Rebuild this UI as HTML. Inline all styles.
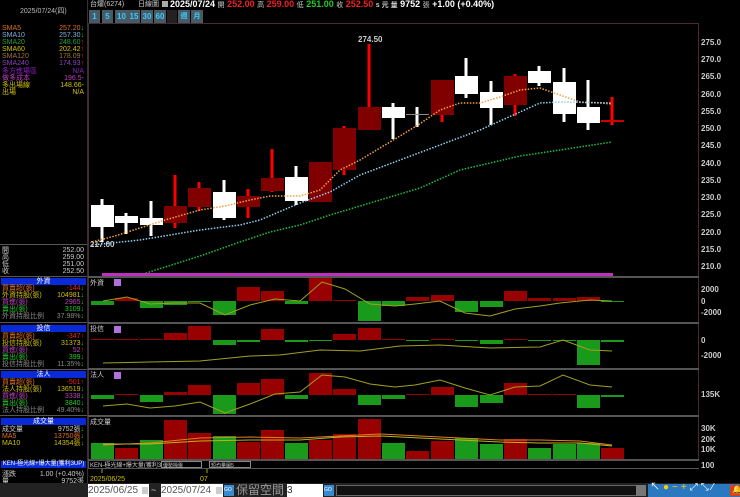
<!DOCTYPE html>
<html><head><meta charset="utf-8"><style>
*{margin:0;padding:0;box-sizing:border-box}
body{width:740px;height:497px;background:#000;overflow:hidden;position:relative;font-family:"Liberation Sans","Noto Sans CJK TC",sans-serif;color:#ccc}
.a{position:absolute;white-space:nowrap;line-height:1}
.s{font-size:7px}
.hd{position:absolute;left:1px;width:85px;height:7px;background:#0a2ad8;color:#fff;font-size:7px;text-align:center;line-height:7px}
.r{position:absolute;left:2px;width:82px;font-size:7px;line-height:7px;display:flex;justify-content:space-between}
.btn{position:absolute;top:10px;height:13px;background:#4a5a64;color:#3cf;font-size:8px;font-weight:bold;text-align:center;line-height:13px}
</style></head><body>
<!-- left header -->
<div class="a s" style="left:20px;top:8px;color:#bbb">2025/07/24(四)</div>
<div class="a" style="left:87px;top:0;width:1px;height:497px;background:#333"></div>
<div class="r" style="top:25px"><span style="color:#e07020">SMA5</span><span style="color:#e07020">257.20<b style="color:#2c2">↓</b></span></div>
<div class="r" style="top:32px"><span style="color:#80b0e0">SMA10</span><span style="color:#80b0e0">257.30<b style="color:#2c2">↓</b></span></div>
<div class="r" style="top:39px"><span style="color:#20a040">SMA20</span><span style="color:#20a040">248.60<b style="color:#e22">↑</b></span></div>
<div class="r" style="top:46px"><span style="color:#d0c000">SMA60</span><span style="color:#d0c000">202.42<b style="color:#e22">↑</b></span></div>
<div class="r" style="top:53px"><span style="color:#a07040">SMA120</span><span style="color:#a07040">178.09<b style="color:#e22">↑</b></span></div>
<div class="r" style="top:60px"><span style="color:#9040c0">SMA240</span><span style="color:#9040c0">174.93<b style="color:#e22">↑</b></span></div>
<div class="r" style="top:68px"><span style="color:#9020c0">多方進場區</span><span style="color:#9020c0">N/A</span></div>
<div class="r" style="top:75px"><span style="color:#c040c0">做多成本</span><span style="color:#c040c0">196.5-</span></div>
<div class="r" style="top:82px"><span style="color:#d0c000">多出場線</span><span style="color:#d0c000">148.66-</span></div>
<div class="r" style="top:89px"><span style="color:#d0c000">出場</span><span style="color:#d0c000">N/A</span></div>
<div class="a" style="left:0;top:244px;width:87px;height:1px;background:#555"></div>
<div class="r" style="top:247px;color:#ccc"><span>開</span><span>252.00</span></div>
<div class="r" style="top:254px;color:#ccc"><span>高</span><span>259.00</span></div>
<div class="r" style="top:261px;color:#ccc"><span>低</span><span>251.00</span></div>
<div class="r" style="top:268px;color:#ccc"><span>收</span><span>252.50</span></div>
<div class="a" style="left:0;top:276px;width:87px;height:1px;background:#555"></div>
<div class="hd" style="top:278px">外資</div>
<div class="r" style="top:285px"><span style="color:#e07020">買賣超(張)</span><span style="color:#e22">-144<b style="color:#2c2">↓</b></span></div>
<div class="r" style="top:292px"><span style="color:#d0c000">外資持股(張)</span><span style="color:#d0c000">104981<b style="color:#2c2">↓</b></span></div>
<div class="r" style="top:299px"><span style="color:#c040c0">買進(張)</span><span style="color:#c040c0">2965<b style="color:#2c2">↓</b></span></div>
<div class="r" style="top:306px"><span style="color:#2c2">賣出(張)</span><span style="color:#2c2">3109<b>↓</b></span></div>
<div class="r" style="top:313px;color:#888"><span>外資持股比例</span><span>37.98%<b style="color:#2c2">↓</b></span></div>
<div class="a" style="left:0;top:322px;width:87px;height:1px;background:#555"></div>
<div class="hd" style="top:325px">投信</div>
<div class="r" style="top:333px"><span style="color:#e07020">買賣超(張)</span><span style="color:#e22">-347<b>↑</b></span></div>
<div class="r" style="top:340px"><span style="color:#d0c000">投信持股(張)</span><span style="color:#d0c000">31373<b style="color:#2c2">↓</b></span></div>
<div class="r" style="top:347px"><span style="color:#c040c0">買進(張)</span><span style="color:#c040c0">52<b style="color:#e22">↑</b></span></div>
<div class="r" style="top:354px"><span style="color:#2c2">賣出(張)</span><span style="color:#2c2">399<b>↓</b></span></div>
<div class="r" style="top:361px;color:#888"><span>投信持股比例</span><span>11.35%<b style="color:#2c2">↓</b></span></div>
<div class="a" style="left:0;top:369px;width:87px;height:1px;background:#555"></div>
<div class="hd" style="top:371px">法人</div>
<div class="r" style="top:379px"><span style="color:#e07020">買賣超(張)</span><span style="color:#e22">-501<b>↑</b></span></div>
<div class="r" style="top:386px"><span style="color:#d0c000">法人持股(張)</span><span style="color:#d0c000">136519<b style="color:#2c2">↓</b></span></div>
<div class="r" style="top:393px"><span style="color:#c040c0">買進(張)</span><span style="color:#c040c0">3338<b style="color:#2c2">↓</b></span></div>
<div class="r" style="top:400px"><span style="color:#2c2">賣出(張)</span><span style="color:#2c2">3840<b>↓</b></span></div>
<div class="r" style="top:407px;color:#888"><span>法人持股比例</span><span>49.40%<b style="color:#2c2">↓</b></span></div>
<div class="a" style="left:0;top:415px;width:87px;height:1px;background:#555"></div>
<div class="hd" style="top:418px">成交量</div>
<div class="r" style="top:426px;color:#ccc"><span>成交量</span><span>9752張<b style="color:#2c2">↓</b></span></div>
<div class="r" style="top:433px"><span style="color:#e07020">MA5</span><span style="color:#e07020">13750張<b style="color:#2c2">↓</b></span></div>
<div class="r" style="top:440px"><span style="color:#d0c000">MA10</span><span style="color:#d0c000">14354張<b style="color:#2c2">↓</b></span></div>
<div class="hd" style="top:461px;font-size:6px">KEN-極光線+爆大量(獲利3UP)</div>
<div class="r" style="top:471px;color:#ccc"><span>漲跌</span><span>1.00 (+0.40%)</span></div>
<div class="r" style="top:478px;color:#ccc"><span>量</span><span>9752張</span></div>

<!-- top bar -->
<div class="a s" style="left:90px;top:1px;color:#ccc">台燿(6274)</div>
<div class="a s" style="left:138px;top:1px;color:#ccc">日線圖</div>
<div class="a" style="left:162px;top:1px;width:6px;height:6px;background:#aaa"></div>
<div class="a" style="left:170px;top:0;font-size:9px;font-weight:bold;color:#fff">2025/07/24 <span style="font-size:7px;font-weight:normal;color:#ccc">開</span> <span style="color:#e22">252.00</span> <span style="font-size:7px;font-weight:normal;color:#ccc">高</span> <span style="color:#e22">259.00</span> <span style="font-size:7px;font-weight:normal;color:#ccc">低</span> <span style="color:#2c2">251.00</span> <span style="font-size:7px;font-weight:normal;color:#ccc">收</span> <span style="color:#e22">252.50</span> <span style="font-size:7px;color:#ccc">s 元 量</span> 9752 <span style="font-size:7px;font-weight:normal;color:#ccc">張</span> +1.00 (+0.40%)</div>
<div class="btn" style="left:89px;width:11px">1</div>
<div class="btn" style="left:102px;width:11px">5</div>
<div class="btn" style="left:115px;width:13px">10</div>
<div class="btn" style="left:128px;width:12px">15</div>
<div class="btn" style="left:141px;width:12px">30</div>
<div class="btn" style="left:154px;width:12px">60</div>
<div class="btn" style="left:167px;width:10px;background:#222"></div>
<div class="btn" style="left:178px;width:12px;font-size:7px">週</div>
<div class="btn" style="left:191px;width:12px;font-size:7px">月</div>

<svg class="a" style="left:0;top:0" width="740" height="497">
<rect x="88.5" y="23.5" width="610" height="437" fill="none" stroke="#4a2a38"/>
<g fill="#ccc" font-size="8" font-weight="bold" font-family="Liberation Sans">
<text x="701" y="45">275.0</text><text x="701" y="62">270.0</text><text x="701" y="79">265.0</text><text x="701" y="97">260.0</text><text x="701" y="114">255.0</text><text x="701" y="131">250.0</text><text x="701" y="148">245.0</text><text x="701" y="166">240.0</text><text x="701" y="183">235.0</text><text x="701" y="200">230.0</text><text x="701" y="217">225.0</text><text x="701" y="235">220.0</text><text x="701" y="252">215.0</text><text x="701" y="269">210.0</text>
<text x="701" y="292">2000</text><text x="701" y="304">0</text><text x="701" y="315">-2000</text>
<text x="701" y="343">0</text><text x="701" y="358">-2000</text>
<text x="701" y="397">135K</text>
<text x="701" y="431">30K</text><text x="701" y="442">20K</text><text x="701" y="452">10K</text>
<text x="701" y="468">100</text>
<text x="358" y="42">274.50</text><text x="90" y="247">217.00</text>
</g>
<!-- wicks -->
<g stroke-width="3">
<line x1="102" y1="199" x2="102" y2="242" stroke="#fff"/><line x1="126" y1="213" x2="126" y2="234" stroke="#fff"/><line x1="151" y1="201" x2="151" y2="236" stroke="#fff"/>
<line x1="175" y1="175" x2="175" y2="228" stroke="#f00"/><line x1="199" y1="182" x2="199" y2="211" stroke="#f00"/><line x1="224" y1="180" x2="224" y2="220" stroke="#fff"/>
<line x1="248" y1="189" x2="248" y2="218" stroke="#f00"/><line x1="272" y1="149" x2="272" y2="192" stroke="#f00"/><line x1="296" y1="166" x2="296" y2="205" stroke="#fff"/>
<line x1="344" y1="126" x2="344" y2="175" stroke="#f00"/><line x1="369" y1="44" x2="369" y2="108" stroke="#f00"/><line x1="393" y1="103" x2="393" y2="139" stroke="#fff"/>
<line x1="417" y1="107" x2="417" y2="127" stroke="#fff"/><line x1="442" y1="80" x2="442" y2="122" stroke="#f00"/><line x1="466" y1="58" x2="466" y2="98" stroke="#fff"/>
<line x1="491" y1="81" x2="491" y2="125" stroke="#fff"/><line x1="515" y1="74" x2="515" y2="116" stroke="#f00"/><line x1="539" y1="66" x2="539" y2="86" stroke="#fff"/>
<line x1="564" y1="68" x2="564" y2="122" stroke="#fff"/><line x1="588" y1="80" x2="588" y2="130" stroke="#fff"/><line x1="612" y1="97" x2="612" y2="125" stroke="#f00"/>
</g>
<g>
<rect x="91" y="205" width="23" height="22" fill="#fff"/><rect x="115" y="216" width="23" height="7" fill="#fff"/><rect x="140" y="218" width="23" height="7" fill="#fff"/>
<rect x="164" y="206" width="23" height="17" fill="#800000"/><rect x="188" y="188" width="23" height="19" fill="#800000"/><rect x="213" y="192" width="23" height="26" fill="#fff"/>
<rect x="237" y="196" width="23" height="11" fill="#800000"/><rect x="261" y="178" width="23" height="13" fill="#800000"/><rect x="285" y="177" width="23" height="24" fill="#fff"/>
<rect x="309" y="162" width="23" height="40" fill="#800000"/><rect x="333" y="128" width="23" height="42" fill="#800000"/><rect x="358" y="107" width="23" height="23" fill="#800000"/>
<rect x="382" y="107" width="23" height="11" fill="#fff"/><rect x="406" y="114" width="23" height="1" fill="#888"/><rect x="431" y="80" width="23" height="35" fill="#800000"/>
<rect x="455" y="76" width="23" height="18" fill="#fff"/><rect x="480" y="92" width="23" height="16" fill="#fff"/><rect x="504" y="76" width="23" height="29" fill="#800000"/>
<rect x="528" y="71" width="23" height="12" fill="#fff"/><rect x="553" y="82" width="23" height="32" fill="#fff"/><rect x="577" y="107" width="23" height="16" fill="#fff"/>
<rect x="601" y="120" width="23" height="2" fill="#c00"/>
</g>
<g fill="none" stroke-width="1.5" stroke-dasharray="1.5 1.5">
<polyline stroke="#f0a040" points="92,242 115,236 140,228 165,220 200,210 225,206 250,200 270,196 300,196 320,190 340,170 360,160 400,136 418,125 440,110 460,103 480,103 500,97 520,90 540,88 560,95 580,102 600,103 612,104"/>
<polyline stroke="#90d0f0" points="92,245 140,240 200,230 240,225 260,220 300,203 330,192 360,175 400,160 440,145 480,130 520,112 540,103 560,102 612,103"/>
<polyline stroke="#20c040" points="140,275 200,256 240,242 270,232 300,225 330,215 380,200 420,188 460,170 520,156 560,150 612,142"/>
</g>
<rect x="102" y="273" width="511" height="3" fill="#c030c0"/>
<!-- panel separators -->
<g fill="#555"><rect x="88" y="276" width="611" height="2"/><rect x="88" y="322" width="611" height="2"/><rect x="88" y="368" width="611" height="2"/><rect x="88" y="415" width="611" height="2"/><rect x="88" y="459" width="611" height="2"/><rect x="88" y="468" width="611" height="1"/></g>
<g font-size="7" fill="#ccc"><text x="90" y="285">外資</text><text x="90" y="331">投信</text><text x="90" y="377">法人</text><text x="90" y="424">成交量</text></g>
<g fill="#b070e0"><rect x="114" y="279" width="7" height="7"/><rect x="114" y="326" width="7" height="7"/><rect x="114" y="372" width="7" height="7"/></g>
<!-- panel1 zero 301 -->
<g>
<rect x="91" y="301" width="23" height="4" fill="#1a9a1a"/><rect x="115" y="298" width="23" height="3" fill="#900"/><rect x="140" y="301" width="23" height="7" fill="#1a9a1a"/><rect x="164" y="301" width="23" height="4" fill="#1a9a1a"/><rect x="188" y="301" width="23" height="1" fill="#1a9a1a"/><rect x="213" y="301" width="23" height="14" fill="#1a9a1a"/><rect x="237" y="287" width="23" height="14" fill="#900"/><rect x="261" y="291" width="23" height="10" fill="#900"/><rect x="285" y="301" width="23" height="3" fill="#1a9a1a"/><rect x="309" y="278" width="23" height="23" fill="#900"/><rect x="333" y="300" width="23" height="1" fill="#900"/><rect x="358" y="301" width="23" height="20" fill="#1a9a1a"/><rect x="382" y="301" width="23" height="5" fill="#1a9a1a"/><rect x="406" y="297" width="23" height="4" fill="#900"/><rect x="431" y="295" width="23" height="6" fill="#900"/><rect x="455" y="301" width="23" height="11" fill="#1a9a1a"/><rect x="480" y="301" width="23" height="6" fill="#1a9a1a"/><rect x="504" y="291" width="23" height="10" fill="#900"/><rect x="528" y="298" width="23" height="3" fill="#900"/><rect x="553" y="298" width="23" height="3" fill="#900"/><rect x="577" y="297" width="23" height="4" fill="#900"/><rect x="601" y="301" width="23" height="1" fill="#1a9a1a"/>
</g>
<polyline fill="none" stroke="#a0a020" points="103,301 127,297 150,304 175,303 200,303 225,315 250,305 275,299 300,301 322,282 345,289 370,304 395,306 415,304 440,301 465,313 490,316 515,309 540,306 560,303 590,300 612,301"/>
<!-- panel2 zero 340 -->
<g>
<rect x="91" y="339" width="23" height="1" fill="#900"/><rect x="115" y="339" width="23" height="1" fill="#900"/><rect x="140" y="339" width="23" height="1" fill="#900"/><rect x="164" y="333" width="23" height="7" fill="#900"/><rect x="188" y="326" width="23" height="14" fill="#900"/><rect x="213" y="340" width="23" height="5" fill="#1a9a1a"/><rect x="237" y="340" width="23" height="2" fill="#1a9a1a"/><rect x="261" y="329" width="23" height="11" fill="#900"/><rect x="285" y="340" width="23" height="2" fill="#1a9a1a"/><rect x="309" y="340" width="23" height="1" fill="#1a9a1a"/><rect x="333" y="334" width="23" height="6" fill="#900"/><rect x="358" y="328" width="23" height="12" fill="#900"/><rect x="382" y="339" width="23" height="1" fill="#900"/><rect x="406" y="340" width="23" height="1" fill="#1a9a1a"/><rect x="431" y="339" width="23" height="1" fill="#900"/><rect x="455" y="340" width="23" height="1" fill="#1a9a1a"/><rect x="480" y="340" width="23" height="4" fill="#1a9a1a"/><rect x="504" y="339" width="23" height="1" fill="#900"/><rect x="528" y="340" width="23" height="1" fill="#1a9a1a"/><rect x="553" y="340" width="23" height="1" fill="#1a9a1a"/><rect x="577" y="340" width="23" height="25" fill="#1a9a1a"/><rect x="601" y="340" width="23" height="2" fill="#1a9a1a"/>
</g>
<polyline fill="none" stroke="#a0a020" points="103,363 150,362 200,361 250,356 280,355 320,350 360,351 400,346 440,345 490,348 540,347 563,340 590,350 612,351"/>
<!-- panel3 zero 395 -->
<g>
<rect x="91" y="395" width="23" height="4" fill="#1a9a1a"/><rect x="115" y="394" width="23" height="1" fill="#900"/><rect x="140" y="395" width="23" height="7" fill="#1a9a1a"/><rect x="164" y="392" width="23" height="3" fill="#900"/><rect x="188" y="385" width="23" height="10" fill="#900"/><rect x="213" y="395" width="23" height="19" fill="#1a9a1a"/><rect x="237" y="383" width="23" height="12" fill="#900"/><rect x="261" y="379" width="23" height="16" fill="#900"/><rect x="285" y="395" width="23" height="4" fill="#1a9a1a"/><rect x="309" y="373" width="23" height="22" fill="#900"/><rect x="333" y="389" width="23" height="6" fill="#900"/><rect x="358" y="395" width="23" height="10" fill="#1a9a1a"/><rect x="382" y="395" width="23" height="4" fill="#1a9a1a"/><rect x="406" y="394" width="23" height="1" fill="#900"/><rect x="431" y="387" width="23" height="8" fill="#900"/><rect x="455" y="395" width="23" height="12" fill="#1a9a1a"/><rect x="480" y="395" width="23" height="8" fill="#1a9a1a"/><rect x="504" y="383" width="23" height="12" fill="#900"/><rect x="528" y="394" width="23" height="1" fill="#900"/><rect x="553" y="394" width="23" height="1" fill="#900"/><rect x="577" y="395" width="23" height="13" fill="#1a9a1a"/><rect x="601" y="395" width="23" height="2" fill="#1a9a1a"/>
</g>
<polyline fill="none" stroke="#a0a020" points="103,406 127,404 150,408 175,406 200,402 225,413 250,404 275,394 300,392 322,375 345,377 370,384 395,387 415,385 440,380 465,388 490,395 515,387 540,386 563,375 590,385 612,387"/>
<!-- volume -->
<g>
<rect x="91" y="443" width="23" height="16" fill="#1a9a1a"/><rect x="115" y="448" width="23" height="11" fill="#900"/><rect x="140" y="440" width="23" height="19" fill="#1a9a1a"/><rect x="164" y="420" width="23" height="39" fill="#900"/><rect x="188" y="433" width="23" height="26" fill="#900"/><rect x="213" y="436" width="23" height="23" fill="#1a9a1a"/><rect x="237" y="442" width="23" height="17" fill="#900"/><rect x="261" y="430" width="23" height="29" fill="#900"/><rect x="285" y="443" width="23" height="16" fill="#1a9a1a"/><rect x="309" y="440" width="23" height="19" fill="#900"/><rect x="333" y="434" width="23" height="25" fill="#900"/><rect x="358" y="419" width="23" height="40" fill="#900"/><rect x="382" y="443" width="23" height="16" fill="#1a9a1a"/><rect x="406" y="451" width="23" height="8" fill="#900"/><rect x="431" y="441" width="23" height="18" fill="#900"/><rect x="455" y="438" width="23" height="21" fill="#1a9a1a"/><rect x="480" y="444" width="23" height="15" fill="#1a9a1a"/><rect x="504" y="439" width="23" height="20" fill="#900"/><rect x="528" y="448" width="23" height="11" fill="#1a9a1a"/><rect x="553" y="444" width="23" height="15" fill="#1a9a1a"/><rect x="577" y="443" width="23" height="16" fill="#1a9a1a"/><rect x="601" y="448" width="23" height="11" fill="#900"/>
</g>
<polyline fill="none" stroke="#e08020" points="103,445 150,443 200,438 250,437 300,438 340,436 380,434 420,436 460,438 500,440 540,440 580,441 612,445"/>
<polyline fill="none" stroke="#c0b020" points="103,444 150,444 200,441 250,440 300,440 340,437 380,436 420,438 460,440 500,442 540,443 580,443 612,446"/>
<!-- bottom indicator row -->
<rect x="88" y="461" width="1" height="7" fill="#555"/>
<text x="90" y="467" font-size="6" fill="#ccc">KEN-極光線+爆大量(獲利3UP)</text>
<rect x="161.5" y="461.5" width="40" height="6" fill="#000" stroke="#888"/><text x="163" y="467" font-size="5" fill="#ccc">優勢操盤</text>
<rect x="209.5" y="461.5" width="41" height="6" fill="#000" stroke="#888"/><text x="211" y="467" font-size="5" fill="#ccc">短均量圖5</text>
<line x1="102" y1="469" x2="102" y2="473" stroke="#aa0"/><line x1="207" y1="469" x2="207" y2="473" stroke="#aa0"/>
<text x="90" y="481" font-size="7" fill="#d0c000">2025/06/25</text><text x="200" y="481" font-size="7" fill="#d0c000">07</text>
</svg>
<!-- bottom controls -->
<div class="a" style="left:0;top:483px;width:740px;height:14px;background:#222"></div>
<div class="a" style="left:88px;top:484px;width:61px;height:13px;background:#fff;color:#555;font-size:10px;line-height:13px">2025/06/25<span style="position:absolute;right:1px;top:3px;width:6px;height:7px;background:#ccc"></span></div>
<div class="a" style="left:151px;top:486px;color:#ccc;font-size:9px">~</div>
<div class="a" style="left:161px;top:484px;width:62px;height:13px;background:#fff;color:#555;font-size:10px;line-height:13px">2025/07/24<span style="position:absolute;right:1px;top:3px;width:6px;height:7px;background:#ccc"></span></div>
<div class="a" style="left:224px;top:485px;width:10px;height:11px;background:#3a8ad0;color:#fff;font-size:5px;line-height:11px">GO</div>
<div class="a" style="left:236px;top:484px;color:#999;font-size:12px">保留空間</div>
<div class="a" style="left:287px;top:484px;width:36px;height:13px;background:#fff;color:#333;font-size:10px;line-height:13px">3</div>
<div class="a" style="left:324px;top:485px;width:10px;height:11px;background:#3a8ad0;color:#fff;font-size:5px;line-height:11px">GO</div>
<div class="a" style="left:336px;top:485px;width:304px;height:11px;background:#111;border:1px solid #666"></div>
<div class="a" style="left:636px;top:485px;width:10px;height:11px;background:#777"></div>
<div class="a" style="left:648px;top:484px;width:92px;height:13px;background:#2a78c0"></div>
<div class="a" style="left:650px;top:483px;font-size:10px;color:#fff;letter-spacing:3px">↖<span style="color:#fc0">●</span><span style="color:#fc0">−</span><span style="color:#fc0">+</span>⤢⤡⁄</div>
<div class="a" style="left:730px;top:485px;width:10px;height:11px;background:#e04010"></div>
<div class="a" style="left:732px;top:486px;font-size:8px;color:#fc0">🔔</div>
</body></html>
